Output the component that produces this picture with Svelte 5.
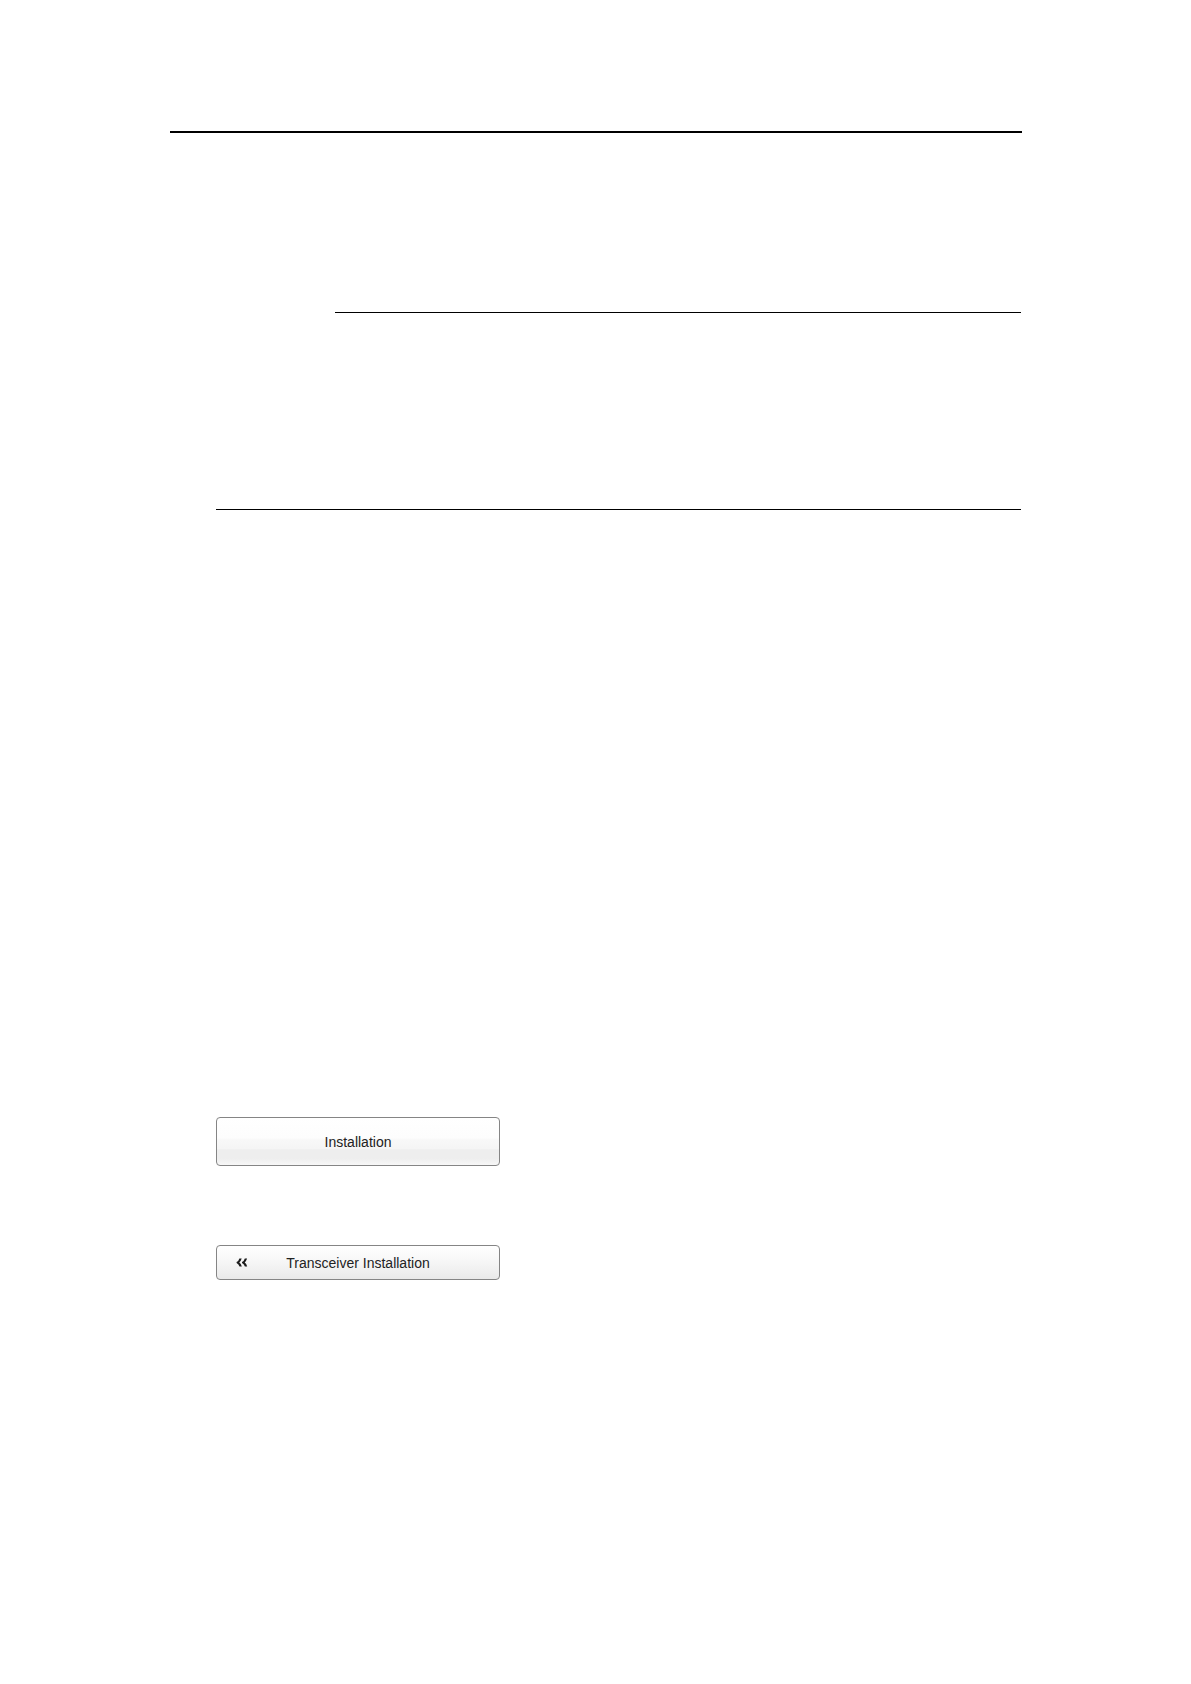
<script lang="ts">
    interface Props {
        onInstallation?: () => void;
        onBack?: () => void;
    }

    let { onInstallation = () => {}, onBack = () => {} }: Props = $props();
</script>

<main class="page">
    <hr class="rule header" />
    <hr class="rule note" />
    <hr class="rule section" />

    <div class="menu">
        <button class="button large" type="button" onclick={onInstallation}>
            Installation
        </button>

        <button class="button small" type="button" onclick={onBack}>
            <svg width="12" height="10" viewBox="0 0 12 10" aria-hidden="true">
                <path d="M3.4 .6H5.7Q4.9 3.2 3.3 4.5Q5 5.8 5.8 8.4H3.5Q2.8 6 .6 4.9V4.1Q2.8 3 3.4 .6Z" />
                <path d="M8.8 .6H11.1Q10.3 3.2 8.7 4.5Q10.4 5.8 11.2 8.4H8.9Q8.2 6 6 4.9V4.1Q8.2 3 8.8 .6Z" />
            </svg>
            <span>Transceiver Installation</span>
        </button>
    </div>
</main>

<style>
    :global(body) {
        margin: 0;
        background: #fff;
    }

    .page {
        box-sizing: border-box;
        min-height: 100vh;
        padding: 131px 170px 0;
        font-family: "Liberation Sans", Arial, sans-serif;
    }

    .rule {
        margin: 0;
        border: 0;
        height: 1px;
        background: #000;
    }

    .rule.header {
        height: 2px;
        margin-right: -1px;
    }

    .rule.note {
        margin-top: 179px;
        margin-left: 165px;
    }

    .rule.section {
        margin-top: 196px;
        margin-left: 46px;
    }

    .menu {
        display: flex;
        flex-direction: column;
        align-items: flex-start;
        gap: 79px;
        margin-top: 607px;
        margin-left: 46px;
    }

    .button {
        box-sizing: border-box;
        display: grid;
        align-items: center;
        width: 284px;
        max-width: 100%;
        padding: 0 19px;
        border: 1px solid #858585;
        border-radius: 4px;
        color: #222;
        font-family: inherit;
        font-size: 14px;
        text-align: center;
        cursor: pointer;
    }

    .button.large {
        height: 49px;
        background: linear-gradient(#fff 0%, #fdfdfd 42%, #f8f8f8 47%, #f5f5f5 65%, #eee 68%, #eee 86%, #f7f7f7 100%);
    }

    .button.small {
        grid-template-columns: 12px 1fr 12px;
        height: 35px;
        background: linear-gradient(#fff 0%, #f9f9f9 35%, #f1f1f1 70%, #e9e9e9 100%);
    }

    svg {
        fill: #1c1c1c;
    }
</style>
